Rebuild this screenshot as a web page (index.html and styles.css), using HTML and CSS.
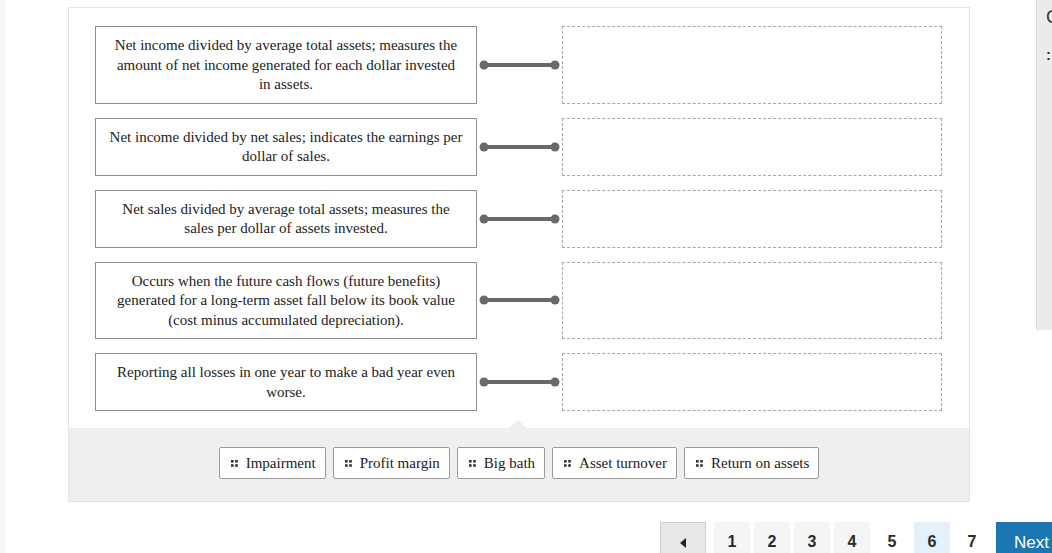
FILE: index.html
```html
<!DOCTYPE html>
<html>
<head>
<meta charset="utf-8">
<link rel="stylesheet" href="styles.css">
</head>
<body>
<div class="page">
  <div class="strip"></div>
  <main class="main">
    <section class="question">
      <div class="matching">
        <div class="row">
          <div class="prompt"><p>Net income divided by average total assets; measures the amount of net income generated for each dollar invested <span class="nowrap">in assets.</span></p></div>
          <svg class="link" width="85" height="12" viewBox="0 0 85 12"><line x1="7" y1="6" x2="78" y2="6"/><circle cx="7" cy="6" r="4.5"/><circle cx="78" cy="6" r="4.5"/></svg>
          <div class="drop"></div>
        </div>
        <div class="row">
          <div class="prompt"><p>Net income divided by net sales; indicates the earnings per dollar of sales.</p></div>
          <svg class="link" width="85" height="12" viewBox="0 0 85 12"><line x1="7" y1="6" x2="78" y2="6"/><circle cx="7" cy="6" r="4.5"/><circle cx="78" cy="6" r="4.5"/></svg>
          <div class="drop"></div>
        </div>
        <div class="row">
          <div class="prompt"><p>Net sales divided by average total assets; measures the sales per dollar of assets invested.</p></div>
          <svg class="link" width="85" height="12" viewBox="0 0 85 12"><line x1="7" y1="6" x2="78" y2="6"/><circle cx="7" cy="6" r="4.5"/><circle cx="78" cy="6" r="4.5"/></svg>
          <div class="drop"></div>
        </div>
        <div class="row">
          <div class="prompt"><p>Occurs when the future cash flows (future benefits) generated for a long-term asset fall below its book value (cost minus accumulated depreciation).</p></div>
          <svg class="link" width="85" height="12" viewBox="0 0 85 12"><line x1="7" y1="6" x2="78" y2="6"/><circle cx="7" cy="6" r="4.5"/><circle cx="78" cy="6" r="4.5"/></svg>
          <div class="drop"></div>
        </div>
        <div class="row">
          <div class="prompt"><p>Reporting all losses in one year to make a bad year even worse.</p></div>
          <svg class="link" width="85" height="12" viewBox="0 0 85 12"><line x1="7" y1="6" x2="78" y2="6"/><circle cx="7" cy="6" r="4.5"/><circle cx="78" cy="6" r="4.5"/></svg>
          <div class="drop"></div>
        </div>
      </div>
      <div class="bank">
        <span class="notch"></span>
        <div class="chip"><svg class="grip" width="7" height="7" viewBox="0 0 7 7"><rect x="0" y="0" width="2.6" height="2.6"/><rect x="4.2" y="0" width="2.6" height="2.6"/><rect x="0" y="4.2" width="2.6" height="2.6"/><rect x="4.2" y="4.2" width="2.6" height="2.6"/></svg>Impairment</div>
        <div class="chip"><svg class="grip" width="7" height="7" viewBox="0 0 7 7"><rect x="0" y="0" width="2.6" height="2.6"/><rect x="4.2" y="0" width="2.6" height="2.6"/><rect x="0" y="4.2" width="2.6" height="2.6"/><rect x="4.2" y="4.2" width="2.6" height="2.6"/></svg>Profit margin</div>
        <div class="chip"><svg class="grip" width="7" height="7" viewBox="0 0 7 7"><rect x="0" y="0" width="2.6" height="2.6"/><rect x="4.2" y="0" width="2.6" height="2.6"/><rect x="0" y="4.2" width="2.6" height="2.6"/><rect x="4.2" y="4.2" width="2.6" height="2.6"/></svg>Big bath</div>
        <div class="chip"><svg class="grip" width="7" height="7" viewBox="0 0 7 7"><rect x="0" y="0" width="2.6" height="2.6"/><rect x="4.2" y="0" width="2.6" height="2.6"/><rect x="0" y="4.2" width="2.6" height="2.6"/><rect x="4.2" y="4.2" width="2.6" height="2.6"/></svg>Asset turnover</div>
        <div class="chip"><svg class="grip" width="7" height="7" viewBox="0 0 7 7"><rect x="0" y="0" width="2.6" height="2.6"/><rect x="4.2" y="0" width="2.6" height="2.6"/><rect x="0" y="4.2" width="2.6" height="2.6"/><rect x="4.2" y="4.2" width="2.6" height="2.6"/></svg>Return on assets</div>
      </div>
    </section>
    <nav class="pager">
      <button class="prev"><svg width="8" height="10" viewBox="0 0 8 10"><polygon points="7,0 7,10 1,5" fill="#222"/></svg></button>
      <span class="pg shaded">1</span>
      <span class="pg shaded">2</span>
      <span class="pg shaded">3</span>
      <span class="pg shaded">4</span>
      <span class="pg">5</span>
      <span class="pg current">6</span>
      <span class="pg">7</span>
      <button class="next">Next</button>
    </nav>
  </main>
  <aside class="side">
    <div class="side-title">C</div>
    <div class="side-note">:</div>
  </aside>
</div>
</body>
</html>
```

FILE: styles.css
```css
html, body {
  margin: 0;
  padding: 0;
  background: #fff;
  overflow: hidden;
  width: 1052px;
  height: 553px;
}

.page {
  display: flex;
  align-items: flex-start;
  width: 1052px;
  height: 553px;
  position: relative;
  overflow: hidden;
}

.strip {
  width: 6px;
  height: 553px;
  background: #f8f7f5;
  flex: none;
}

.main {
  padding: 7px 0 0 62px;
  flex: none;
  width: 984px;
}

.question {
  width: 900px;
  border: 1px solid #e4e4e4;
  background: #fff;
}

.matching {
  padding: 18px 0 17px 26px;
  display: flex;
  flex-direction: column;
  gap: 14px;
}

.row {
  display: flex;
  align-items: stretch;
}

.prompt {
  flex: none;
  width: 382px;
  box-sizing: border-box;
  border: 1px solid #8f8f8f;
  padding: 9px 13px 8px;
  font-family: "Liberation Serif", "Times New Roman", serif;
  font-size: 15px;
  line-height: 19.5px;
  color: #222;
  text-align: center;
  display: flex;
  align-items: center;
  justify-content: center;
}
.prompt p {
  margin: 0;
}
.nowrap {
  white-space: nowrap;
}

.link {
  flex: none;
  align-self: center;
  width: 85px;
}
.link line {
  stroke: #696969;
  stroke-width: 4;
}
.link circle {
  fill: #696969;
}

.drop {
  flex: none;
  width: 380px;
  box-sizing: border-box;
  border: 1px dashed #a8a8a8;
}

.bank {
  position: relative;
  background: #efefef;
  padding: 19px 0 22px;
  display: flex;
  justify-content: center;
  gap: 7px;
}

.notch {
  position: absolute;
  left: 440px;
  top: -8px;
  width: 0;
  height: 0;
  border-left: 9px solid transparent;
  border-right: 9px solid transparent;
  border-bottom: 8px solid #efefef;
}

.chip {
  display: flex;
  align-items: center;
  height: 32px;
  box-sizing: border-box;
  padding: 0 9px 0 11px;
  background: #fff;
  border: 1px solid #9a9a9a;
  border-radius: 2px;
  font-family: "Liberation Serif", "Times New Roman", serif;
  font-size: 15px;
  color: #222;
}

.grip {
  margin-right: 8px;
  fill: #333;
}

.pager {
  margin: 20px 0 0 592px;
  display: flex;
  align-items: stretch;
  gap: 4px;
  height: 40px;
  width: 480px;
}

.prev {
  flex: none;
  width: 46px;
  margin-right: 4px;
  background: #e8e8e8;
  border: 1px solid #cfcfcf;
  border-bottom: none;
  padding: 0;
  display: flex;
  align-items: center;
  justify-content: center;
}

.pg {
  flex: none;
  width: 36px;
  display: flex;
  align-items: center;
  justify-content: center;
  font-family: "Liberation Sans", Arial, sans-serif;
  font-weight: bold;
  font-size: 16px;
  color: #2a2a2a;
  background: #fff;
}
.pg.shaded {
  background: #f5f5f5;
}
.pg.current {
  background: #e4f0fb;
}

.next {
  flex: none;
  margin-left: 2px;
  width: 80px;
  border: none;
  background: #1b76b1;
  color: #fff;
  font-family: "Liberation Sans", Arial, sans-serif;
  font-size: 17px;
  text-align: left;
  padding: 1px 0 0 18px;
}

.side {
  position: absolute;
  top: 0;
  left: 1036px;
  width: 16px;
  height: 330px;
  overflow: hidden;
  background: #ebebeb;
  border-left: 1px solid #dcdcdc;
  padding: 6px 0 0 9px;
  box-sizing: border-box;
  font-family: "Liberation Sans", Arial, sans-serif;
  white-space: nowrap;
  color: #333;
}
.side-title {
  font-size: 18px;
  line-height: 22px;
}
.side-note {
  font-size: 15px;
  margin-top: 18px;
  font-weight: bold;
}
```
